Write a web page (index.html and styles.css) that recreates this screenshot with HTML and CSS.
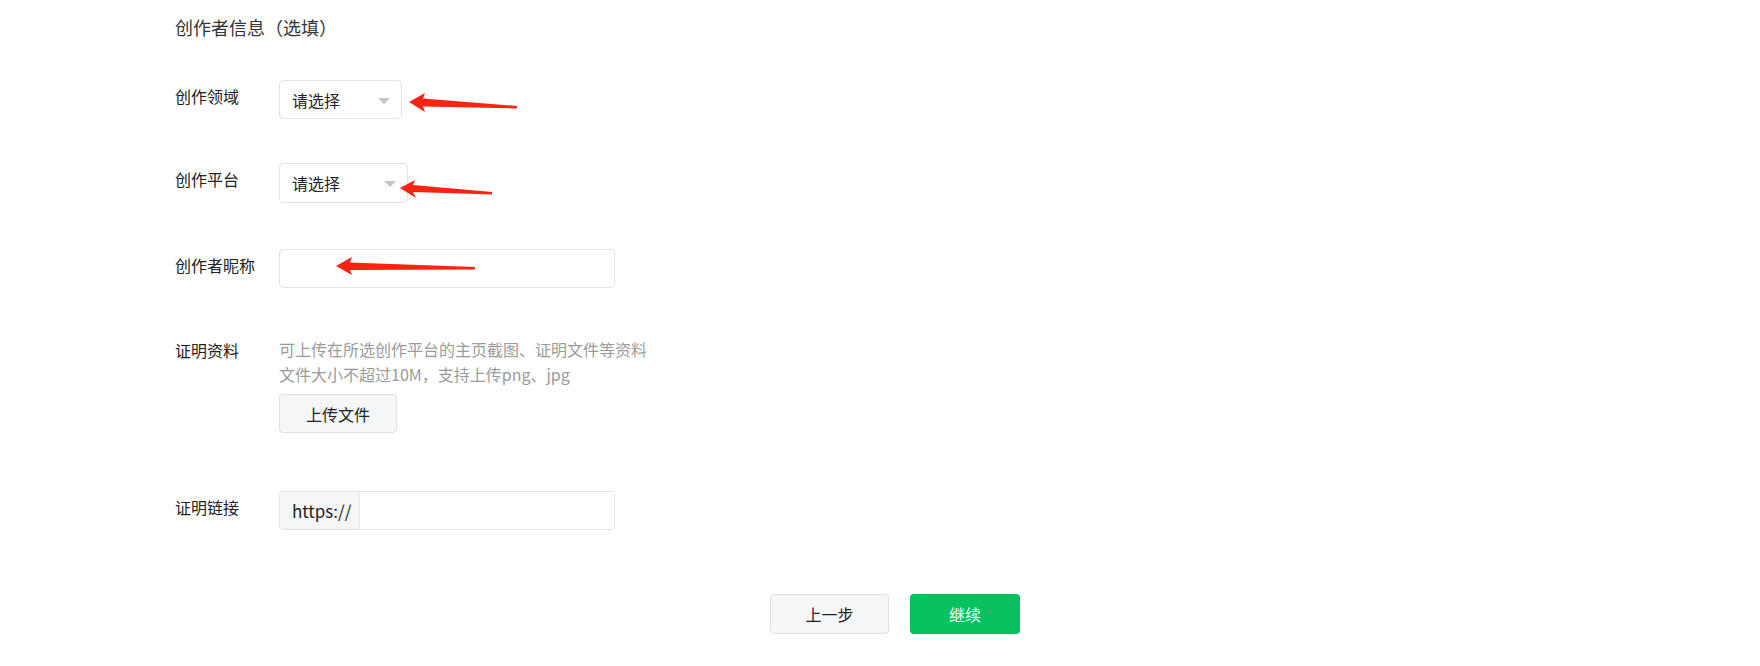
FILE: index.html
```html
<!DOCTYPE html>
<html lang="zh-CN">
<head>
  <meta charset="UTF-8" />
  <title>创作者信息</title>
  <link rel="stylesheet" href="styles.css">
</head>
<body>

  <div class="page">
    <h2 class="section-title">创作者信息（选填）</h2>

    <div class="form">
      <div class="form-row row-domain">
        <div class="form-label">创作领域</div>
        <div class="select select-domain">
          <span>请选择</span>
          <i class="caret"></i>
        </div>
      </div>

      <div class="form-row row-platform">
        <div class="form-label">创作平台</div>
        <div class="select select-platform">
          <span>请选择</span>
          <i class="caret"></i>
        </div>
      </div>

      <div class="form-row row-nickname">
        <div class="form-label">创作者昵称</div>
        <input class="text-input" type="text" />
      </div>

      <div class="form-row row-proof">
        <div class="form-label label-flat">证明资料</div>
        <div class="proof-field">
          <p class="hint">可上传在所选创作平台的主页截图、证明文件等资料<br>文件大小不超过10M，支持上传png、jpg</p>
          <button class="btn btn-plain btn-upload">上传文件</button>
        </div>
      </div>

      <div class="form-row row-link">
        <div class="form-label">证明链接</div>
        <div class="input-group">
          <span class="input-prefix">https://</span>
          <input class="input-bare" type="text" />
        </div>
      </div>
    </div>

    <div class="actions">
      <button class="btn btn-plain btn-prev">上一步</button>
      <button class="btn btn-primary btn-next">继续</button>
    </div>

    <!-- 标注箭头 -->
    <svg class="marks" width="1760" height="666" viewBox="0 0 1760 666">
      <path d="M409 102 L425 93 L423 98.5 L517 106 L517 108.5 L423 106.5 L425 112 Z" />
      <path d="M400 188 L415 180 L413 185 L492 192 L492 194.5 L413 192 L416 198 Z" />
      <path d="M336 266 L352 257 L350 262.5 L475 267 L475 269.5 L350 270 L352 275 Z" />
    </svg>
  </div>

</body>
</html>
```

FILE: styles.css
```css
* {
  box-sizing: border-box;
}
html, body {
  margin: 0;
  padding: 0;
  background: #fff;
  font-family: "Noto Sans CJK SC", "Noto Sans", sans-serif;
  color: #333;
}

.page {
  position: relative;
  width: 1760px;
  height: 666px;
  padding: 14px 0 0 175px;
  overflow: hidden;
}

.section-title {
  margin: 0;
  font-size: 18px;
  line-height: 26px;
  font-weight: normal;
  color: #353535;
}

.form {
  display: flex;
  flex-direction: column;
}

.form-row {
  display: flex;
  align-items: flex-start;
}
.row-domain { margin-top: 40px; }
.row-platform { margin-top: 44px; }
.row-nickname { margin-top: 46px; }
.row-proof { margin-top: 49px; }
.row-link { margin-top: 58px; }

.form-label {
  width: 104px;
  flex: none;
  padding-top: 3px;
  font-size: 16px;
  line-height: 26px;
  color: #222;
}
.form-label.label-flat {
  padding-top: 0;
}

/* 下拉 */
.select {
  height: 39px;
  border: 1px solid #e3e3e3;
  border-radius: 4px;
  display: flex;
  align-items: center;
  justify-content: space-between;
  padding: 0 11px 0 12px;
  font-size: 16px;
  color: #222;
  background: #fff;
}
.select-domain { width: 123px; }
.select-platform { width: 129px; height: 40px; }

.caret {
  width: 0;
  height: 0;
  border-left: 6px solid transparent;
  border-right: 6px solid transparent;
  border-top: 6px solid #c4c4c4;
  margin-top: 2px;
}

.text-input {
  width: 336px;
  height: 39px;
  border: 1px solid #e3e3e3;
  border-radius: 4px;
  font: inherit;
  outline: none;
  padding: 0 12px;
}

/* 证明资料 */
.proof-field {
  display: flex;
  flex-direction: column;
  align-items: flex-start;
}
.hint {
  margin: 0;
  font-size: 16px;
  line-height: 25px;
  color: #9b9b9b;
}

.btn {
  font-family: inherit;
  font-size: 16px;
  border-radius: 4px;
  cursor: pointer;
}
.btn-plain {
  background: #f5f6f7;
  border: 1px solid #e0e0e0;
  color: #222;
}
.btn-upload {
  width: 118px;
  height: 39px;
  margin-top: 7px;
}

/* 证明链接 */
.input-group {
  width: 336px;
  height: 39px;
  display: flex;
  border: 1px solid #e3e3e3;
  border-radius: 4px;
  overflow: hidden;
}
.input-prefix {
  width: 80px;
  flex: none;
  display: flex;
  align-items: center;
  padding-left: 12px;
  background: #f5f6f7;
  border-right: 1px solid #e6e6e6;
  font-size: 17px;
  color: #222;
}
.input-bare {
  flex: 1;
  border: none;
  outline: none;
  font: inherit;
  padding: 0 12px;
}

.actions {
  display: flex;
  justify-content: center;
  gap: 21px;
  margin-top: 64px;
  margin-left: -175px;
  padding-left: 30px;
}
.btn-prev {
  width: 119px;
  height: 40px;
}
.btn-primary {
  width: 110px;
  height: 40px;
  border: none;
  background: #07c160;
  color: #fff;
}

.marks {
  position: absolute;
  top: 0;
  left: 0;
  pointer-events: none;
}
.marks path {
  fill: #fe2213;
}
```
